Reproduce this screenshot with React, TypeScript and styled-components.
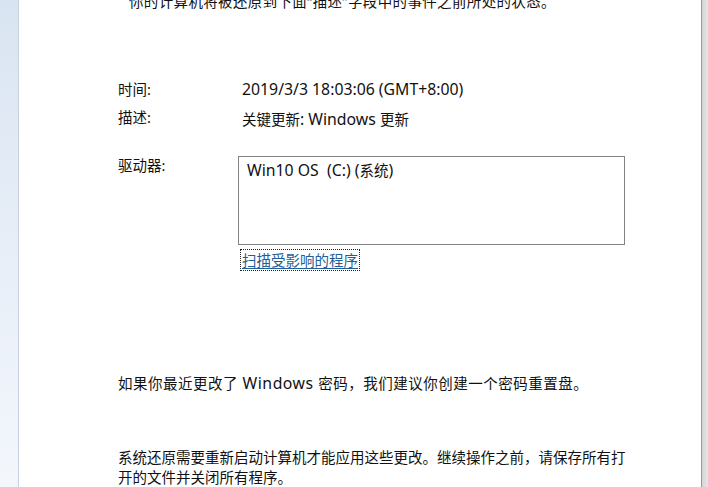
import React from 'react';
import styled, { createGlobalStyle } from 'styled-components';

const GlobalStyle = createGlobalStyle`
  html, body {
    margin: 0;
    padding: 0;
    background: #ffffff;
    overflow: hidden;
  }
  body {
    font-family: "Noto Sans", "Noto Sans CJK SC", sans-serif;
  }
`;

const Window = styled.div`
  display: flex;
  width: 708px;
  height: 487px;
  overflow: hidden;
`;

const Sidebar = styled.div`
  width: 18px;
  flex: none;
  background: linear-gradient(180deg, #d9e4f2 0%, #e6edf7 45%, #f3f7fc 100%);
  border-right: 1px solid #c8d2de;
`;

const Content = styled.div`
  flex: 1;
  background: #fff;
  padding: 0 0 0 99px;
  color: #111;
  font-size: 14.5px;
  line-height: 20px;
`;

const Frame = styled.div`
  width: 6px;
  flex: none;
  border-left: 1px solid #9a9a9a;
  background: linear-gradient(90deg, #d4d4d4, #e6e6e6);
`;

// latin runs are drawn a bit larger, like YaHei's western glyphs
const Latin = styled.span<{ $gap?: number }>`
  font-size: 15.8px;
  word-spacing: ${(p) => p.$gap ?? 0}px;
`;

const Para = styled.p<{ $top: number; $indent?: number; $spacing?: number }>`
  margin: ${(p) => p.$top}px 0 0 0;
  width: 510px;
  text-indent: ${(p) => p.$indent ?? 0}px;
  letter-spacing: ${(p) => p.$spacing ?? 0}px;
`;

const Fields = styled.div`
  display: grid;
  grid-template-columns: 120px 387px;
  margin-top: 68px;
`;

const Label = styled.div<{ $top?: number }>`
  margin-top: ${(p) => p.$top ?? 0}px;
`;

const Value = styled.div<{ $top?: number }>`
  margin-top: ${(p) => p.$top ?? 0}px;
  padding-left: 4px;
`;

const DriveBox = styled.div`
  margin-top: 27px;
  height: 89px;
  border: 1px solid #828282;
  padding: 3px 0 0 8px;
  box-sizing: border-box;
`;

const LinkRow = styled.div`
  grid-column: 2;
  padding-left: 3px;
  margin-top: 5px;
`;

const Link = styled.a`
  display: inline-block;
  color: #1e5f98;
  text-decoration: underline;
  text-underline-offset: 2px;
  outline: 1px dotted #222;
  padding: 0 1px;
  line-height: 20px;
  cursor: pointer;
`;

export default function App() {
  return (
    <>
      <GlobalStyle />
      <Window>
        <Sidebar />
        <Content>
          <Para $top={-9} $indent={11} $spacing={0.35}>
            你的计算机将被还原到下面“描述”字段中的事件之前所处的状态。
          </Para>
          <Fields>
            <Label>时间:</Label>
            <Value>
              <Latin>2019/3/3 18:03:06 (GMT+8:00)</Latin>
            </Value>
            <Label $top={8}>描述:</Label>
            <Value $top={10}>
              关键更新<Latin>: Windows </Latin>更新
            </Value>
            <Label $top={26}>驱动器:</Label>
            <DriveBox>
              <Latin>Win10 OS&nbsp; (C:) (</Latin>系统<Latin>)</Latin>
            </DriveBox>
            <LinkRow>
              <Link>扫描受影响的程序</Link>
            </LinkRow>
          </Fields>
          <Para $top={103} $spacing={0.5}>
            如果你最近更改了<Latin> Windows </Latin>密码，我们建议你创建一个密码重置盘。
          </Para>
          <Para $top={54}>
            系统还原需要重新启动计算机才能应用这些更改。继续操作之前，请保存所有打开的文件并关闭所有程序。
          </Para>
        </Content>
        <Frame />
      </Window>
    </>
  );
}
